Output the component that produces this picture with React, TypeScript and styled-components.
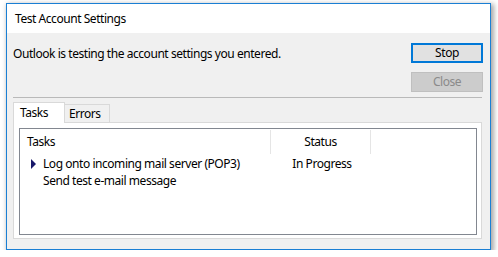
import * as React from 'react';
import styled, { createGlobalStyle } from 'styled-components';

const GlobalStyle = createGlobalStyle`
  html, body {
    margin: 0;
    padding: 0;
    background: #ffffff;
  }
  body {
    font-family: "Noto Sans", "Open Sans", sans-serif;
    font-size: 12px;
    letter-spacing: -0.45px;
    color: #000000;
  }
`;

const Page = styled.div`
  padding: 3px 0 0 6px;
`;

const DialogWindow = styled.div`
  width: 483px;
  height: 245px;
  border: 1px solid #1a7fd4;
  box-shadow: 2px 2px 5px 1px rgba(0, 0, 0, 0.35);
  display: flex;
  flex-direction: column;
`;

const TitleBar = styled.div`
  height: 29px;
  line-height: 29px;
  padding-left: 8px;
  background: #ffffff;
`;

const DialogBody = styled.div`
  flex: 1;
  display: flex;
  flex-direction: column;
  background: #f0f0f0;
  padding: 0 7px 10px 6px;
`;

const TopRow = styled.div`
  display: flex;
  justify-content: space-between;
  padding-top: 10px;
`;

const Message = styled.div`
  line-height: 20px;
  padding-top: 1px;
`;

const ButtonColumn = styled.div`
  display: flex;
  flex-direction: column;
  gap: 9px;
`;

const Button = styled.button<{ $primary?: boolean }>`
  box-sizing: border-box;
  width: 72px;
  height: 20px;
  padding: 0;
  font-family: inherit;
  font-size: 12px;
  letter-spacing: inherit;
  line-height: 16px;
  border: ${(p) => (p.$primary ? '2px solid #0078d7' : '1px solid #bfbfbf')};
  background: ${(p) => (p.$primary ? '#e1e1e1' : '#cccccc')};
  color: ${(p) => (p.$primary ? '#000000' : '#8a8a8a')};
`;

const Separator = styled.div`
  height: 1px;
  margin: 5px 1px 0 0;
  background: #b9b9b9;
`;

const TabStrip = styled.div`
  display: flex;
  align-items: flex-end;
  height: 24px;
`;

const Tab = styled.div<{ $active?: boolean }>`
  box-sizing: border-box;
  height: ${(p) => (p.$active ? '21px' : '18px')};
  margin-bottom: ${(p) => (p.$active ? '-1px' : '0')};
  width: ${(p) => (p.$active ? '52px' : '45px')};
  padding-left: ${(p) => (p.$active ? '6px' : '4px')};
  line-height: ${(p) => (p.$active ? '19px' : '18px')};
  border: 1px solid #d9d9d9;
  border-bottom: none;
  border-left: ${(p) => (p.$active ? '1px solid #d9d9d9' : 'none')};
  background: ${(p) => (p.$active ? '#ffffff' : '#f0f0f0')};
  position: relative;
  z-index: ${(p) => (p.$active ? 1 : 0)};
`;

const TabPanel = styled.div`
  flex: 1;
  display: flex;
  margin-right: 1px;
  border: 1px solid #d9d9d9;
  background: #ffffff;
  padding: 5px 4px 3px 5px;
`;

const ListView = styled.div`
  flex: 1;
  border: 1px solid #828790;
  background: #ffffff;
`;

const HeaderRow = styled.div`
  display: grid;
  grid-template-columns: 251px 100px 1fr;
  height: 24px;
  padding-top: 1px;
`;

const HeaderCell = styled.div<{ $center?: boolean }>`
  line-height: 24px;
  padding-left: ${(p) => (p.$center ? '0' : '7px')};
  text-align: ${(p) => (p.$center ? 'center' : 'left')};
  border-right: 1px solid #e5e5e5;
`;

const Rows = styled.div`
  padding-top: 1px;
`;

const Row = styled.div`
  display: grid;
  grid-template-columns: 252px 100px 1fr;
  height: 17px;
  line-height: 17px;
`;

const TaskCell = styled.div`
  display: flex;
  align-items: center;
  padding-left: 11px;
`;

const Pointer = styled.span<{ $visible?: boolean }>`
  flex: none;
  width: 0;
  height: 0;
  border-top: 5px solid transparent;
  border-bottom: 5px solid transparent;
  border-left: 5px solid ${(p) => (p.$visible ? '#18186a' : 'transparent')};
  margin-right: 7px;
`;

const StatusCell = styled.div`
  text-align: center;
`;

const tasks = [
  { name: 'Log onto incoming mail server (POP3)', status: 'In Progress', current: true },
  { name: 'Send test e-mail message', status: '', current: false },
];

export default function App() {
  return (
    <Page>
      <GlobalStyle />
      <DialogWindow>
        <TitleBar>Test Account Settings</TitleBar>
        <DialogBody>
          <TopRow>
            <Message>Outlook is testing the account settings you entered.</Message>
            <ButtonColumn>
              <Button $primary>Stop</Button>
              <Button disabled>Close</Button>
            </ButtonColumn>
          </TopRow>
          <Separator />
          <TabStrip>
            <Tab $active>Tasks</Tab>
            <Tab>Errors</Tab>
          </TabStrip>
          <TabPanel>
            <ListView>
              <HeaderRow>
                <HeaderCell>Tasks</HeaderCell>
                <HeaderCell $center>Status</HeaderCell>
              </HeaderRow>
              <Rows>
                {tasks.map((t) => (
                  <Row key={t.name}>
                    <TaskCell>
                      <Pointer $visible={t.current} />
                      {t.name}
                    </TaskCell>
                    <StatusCell>{t.status}</StatusCell>
                  </Row>
                ))}
              </Rows>
            </ListView>
          </TabPanel>
        </DialogBody>
      </DialogWindow>
    </Page>
  );
}
